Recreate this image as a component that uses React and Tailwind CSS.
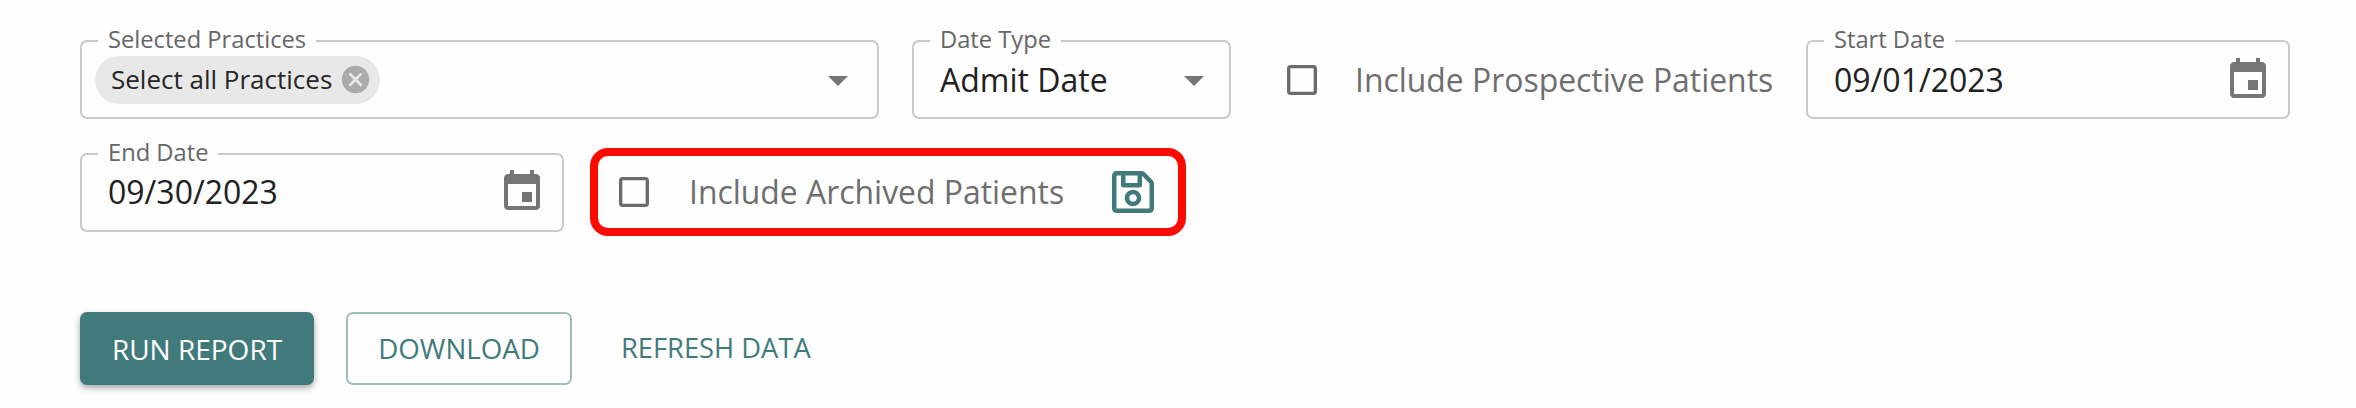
import React from "react";
import { FaRegSave } from "react-icons/fa";

const font = { fontFamily: '"Open Sans", sans-serif' };

function Field({ label, className, children }) {
  return (
    <div className={`relative h-[79px] rounded-[7px] border-2 border-[#c8c8c8] flex items-center ${className}`}>
      <span className="absolute left-[16px] top-[-16px] h-[26px] bg-[#fefefe] px-[10px] text-[23.7px] leading-[26px] text-[#666666] whitespace-nowrap">
        {label}
      </span>
      {children}
    </div>
  );
}

function Arrow() {
  return (
    <svg width="48" height="48" viewBox="0 0 24 24" fill="#757575" className="shrink-0">
      <path d="M7 10l5 5 5-5z" />
    </svg>
  );
}

function Calendar() {
  return (
    <svg width="48" height="48" viewBox="0 0 24 24" fill="#757575" className="shrink-0">
      <path d="M17 12h-5v5h5v-5zM16 1v2H8V1H6v2H5c-1.11 0-1.99.9-1.99 2L3 19c0 1.1.89 2 2 2h14c1.1 0 2-.9 2-2V5c0-1.1-.9-2-2-2h-1V1h-2zm3 18H5V8h14v11z" />
    </svg>
  );
}

function Check() {
  return (
    <svg width="40" height="40" viewBox="0 0 24 24" fill="#6b6b6b" className="shrink-0">
      <path d="M19 5v14H5V5h14m0-2H5c-1.1 0-2 .9-2 2v14c0 1.1.9 2 2 2h14c1.1 0 2-.9 2-2V5c0-1.1-.9-2-2-2z" />
    </svg>
  );
}

export default function App() {
  return (
    <div className="w-[2356px] h-[408px] overflow-hidden bg-[#fefefe] pt-[40px] pl-[80px]" style={font}>
      <div className="flex items-start">
        <Field label="Selected Practices" className="w-[799px] pl-[13px] pr-[15px] justify-between">
          <div className="flex items-center h-[48px] rounded-full bg-[#e8e8e8] pl-[16px] pr-[8px]">
            <span className="text-[26px] text-[#262626] whitespace-nowrap">Select all Practices</span>
            <svg width="33" height="33" viewBox="0 0 24 24" fill="#ababab" className="ml-[7px] shrink-0">
              <path d="M12 2C6.47 2 2 6.47 2 12s4.47 10 10 10 10-4.47 10-10S17.53 2 12 2zm5 13.59L15.59 17 12 13.41 8.41 17 7 15.59 10.59 12 7 8.41 8.41 7 12 10.59 15.59 7 17 8.41 13.41 12 17 15.59z" />
            </svg>
          </div>
          <Arrow />
        </Field>
        <Field label="Date Type" className="ml-[33px] w-[319px] pl-[26px] pr-[11px] justify-between">
          <span className="text-[32px] text-[#212121] whitespace-nowrap">Admit Date</span>
          <Arrow />
        </Field>
        <div className="flex items-center h-[79px] w-[575px] pl-[51px]">
          <Check />
          <span className="ml-[33px] text-[31.9px] text-[#6e6e6e] whitespace-nowrap">Include Prospective Patients</span>
        </div>
        <Field label="Start Date" className="w-[484px] pl-[26px] pr-[16px] justify-between">
          <span className="text-[32px] text-[#212121]">09/01/2023</span>
          <Calendar />
        </Field>
      </div>
      <div className="mt-[29px] flex items-center h-[88px]">
        <Field label="End Date" className="w-[484px] pl-[26px] pr-[16px] justify-between">
          <span className="text-[32px] text-[#212121]">09/30/2023</span>
          <Calendar />
        </Field>
        <div className="ml-[26px] flex items-center h-[88px] w-[596px] rounded-[18px] border-8 border-[#ff0a00] pl-[16px]">
          <Check />
          <span className="ml-[35px] text-[31.9px] text-[#6e6e6e] whitespace-nowrap">Include Archived Patients</span>
          <FaRegSave size={48} color="#417a7b" className="ml-[45px] shrink-0" />
        </div>
      </div>
      <div className="mt-[76px] flex items-center">
        <button className="h-[73px] w-[234px] rounded-[7px] bg-[#417a7b] text-white text-[28px] shadow-[0_3px_6px_rgba(0,0,0,0.35)]">RUN REPORT</button>
        <button className="ml-[32px] h-[73px] w-[226px] rounded-[7px] border-2 border-[#a0bdbd] text-[#417a7b] text-[27.7px]">DOWNLOAD</button>
        <button className="ml-[49px] h-[73px] text-[#417a7b] text-[27.3px]">REFRESH DATA</button>
      </div>
    </div>
  );
}
